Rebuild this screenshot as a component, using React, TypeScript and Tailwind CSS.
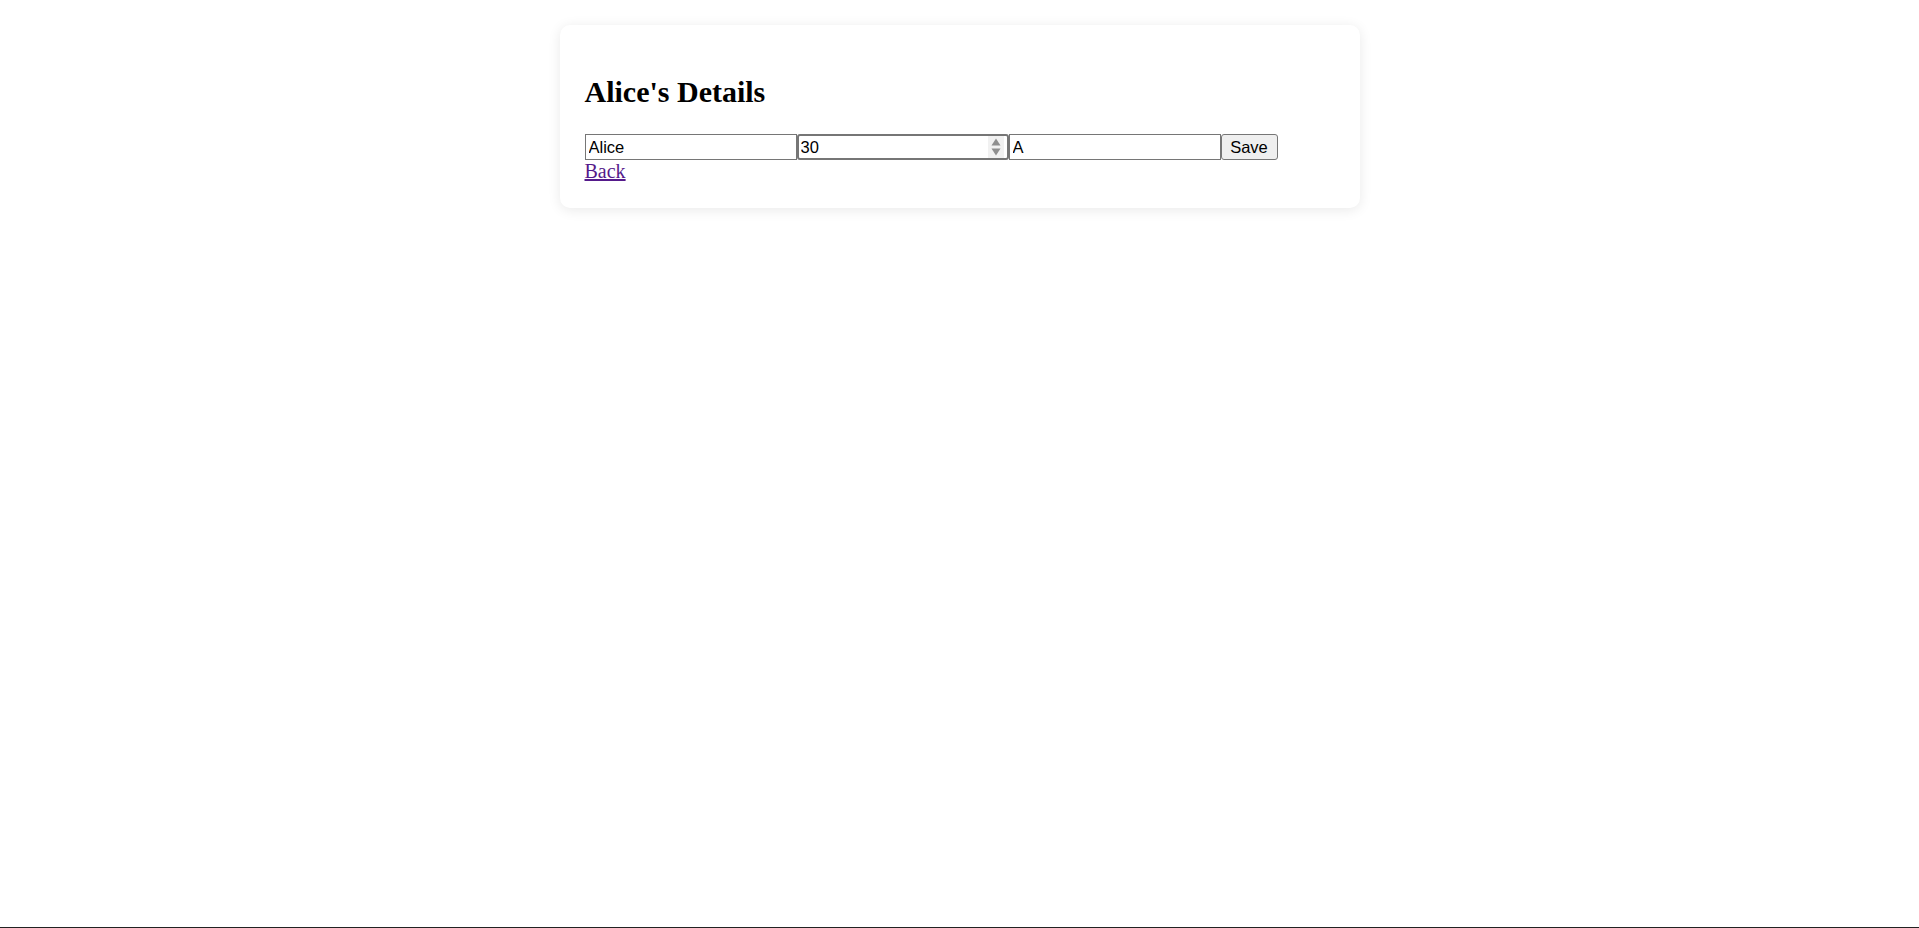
import { useState } from "react";

const field =
  "w-[212px] h-[26px] border border-[#767676] bg-white px-[3px] text-[16.5px] text-black font-['Liberation_Sans',Arial,sans-serif] leading-[20px]";

export default function App() {
  const [name, setName] = useState("Alice");
  const [age, setAge] = useState("30");
  const [grade, setGrade] = useState("A");

  return (
    <div className="h-screen overflow-hidden bg-white border-b border-[#222] pt-[25px] font-['Liberation_Serif','Times_New_Roman',serif]">
      <div className="mx-auto w-[800px] rounded-[10px] bg-white p-[25px] shadow-[0_2px_13px_rgba(0,0,0,0.09)]">
        <h2 className="mt-[25px] mb-[26px] text-[30px] font-bold leading-[33px] text-black">
          Alice's Details
        </h2>
        <form className="flex h-[26px] items-start" onSubmit={(e) => e.preventDefault()}>
          <input className={field} value={name} onChange={(e) => setName(e.target.value)} />
          <div className="relative">
            <input
              className={`${field} rounded-[3px] border-2 border-[#101010] pl-[2px] outline-none`}
              value={age}
              onChange={(e) => setAge(e.target.value)}
            />
            <div className="absolute right-[5px] top-[2px] flex h-[22px] w-[16px] flex-col items-center justify-center gap-[2px] bg-[#f1f1f1]">
              <svg width="10" height="8" viewBox="0 0 10 8">
                <path d="M5 0.5 L9.5 7.5 H0.5 Z" fill="#8f8f8f" />
              </svg>
              <svg width="10" height="8" viewBox="0 0 10 8">
                <path d="M5 7.5 L9.5 0.5 H0.5 Z" fill="#8f8f8f" />
              </svg>
            </div>
          </div>
          <input className={field} value={grade} onChange={(e) => setGrade(e.target.value)} />
          <button
            type="submit"
            className="h-[26px] w-[57px] rounded-[3px] border border-[#767676] bg-[#efefef] text-[16.5px] leading-[20px] text-black font-['Liberation_Sans',Arial,sans-serif]"
          >
            Save
          </button>
        </form>
        <a href="#" className="block w-fit text-[20px] leading-[23px] text-[#551a8b] underline">
          Back
        </a>
      </div>
    </div>
  );
}
